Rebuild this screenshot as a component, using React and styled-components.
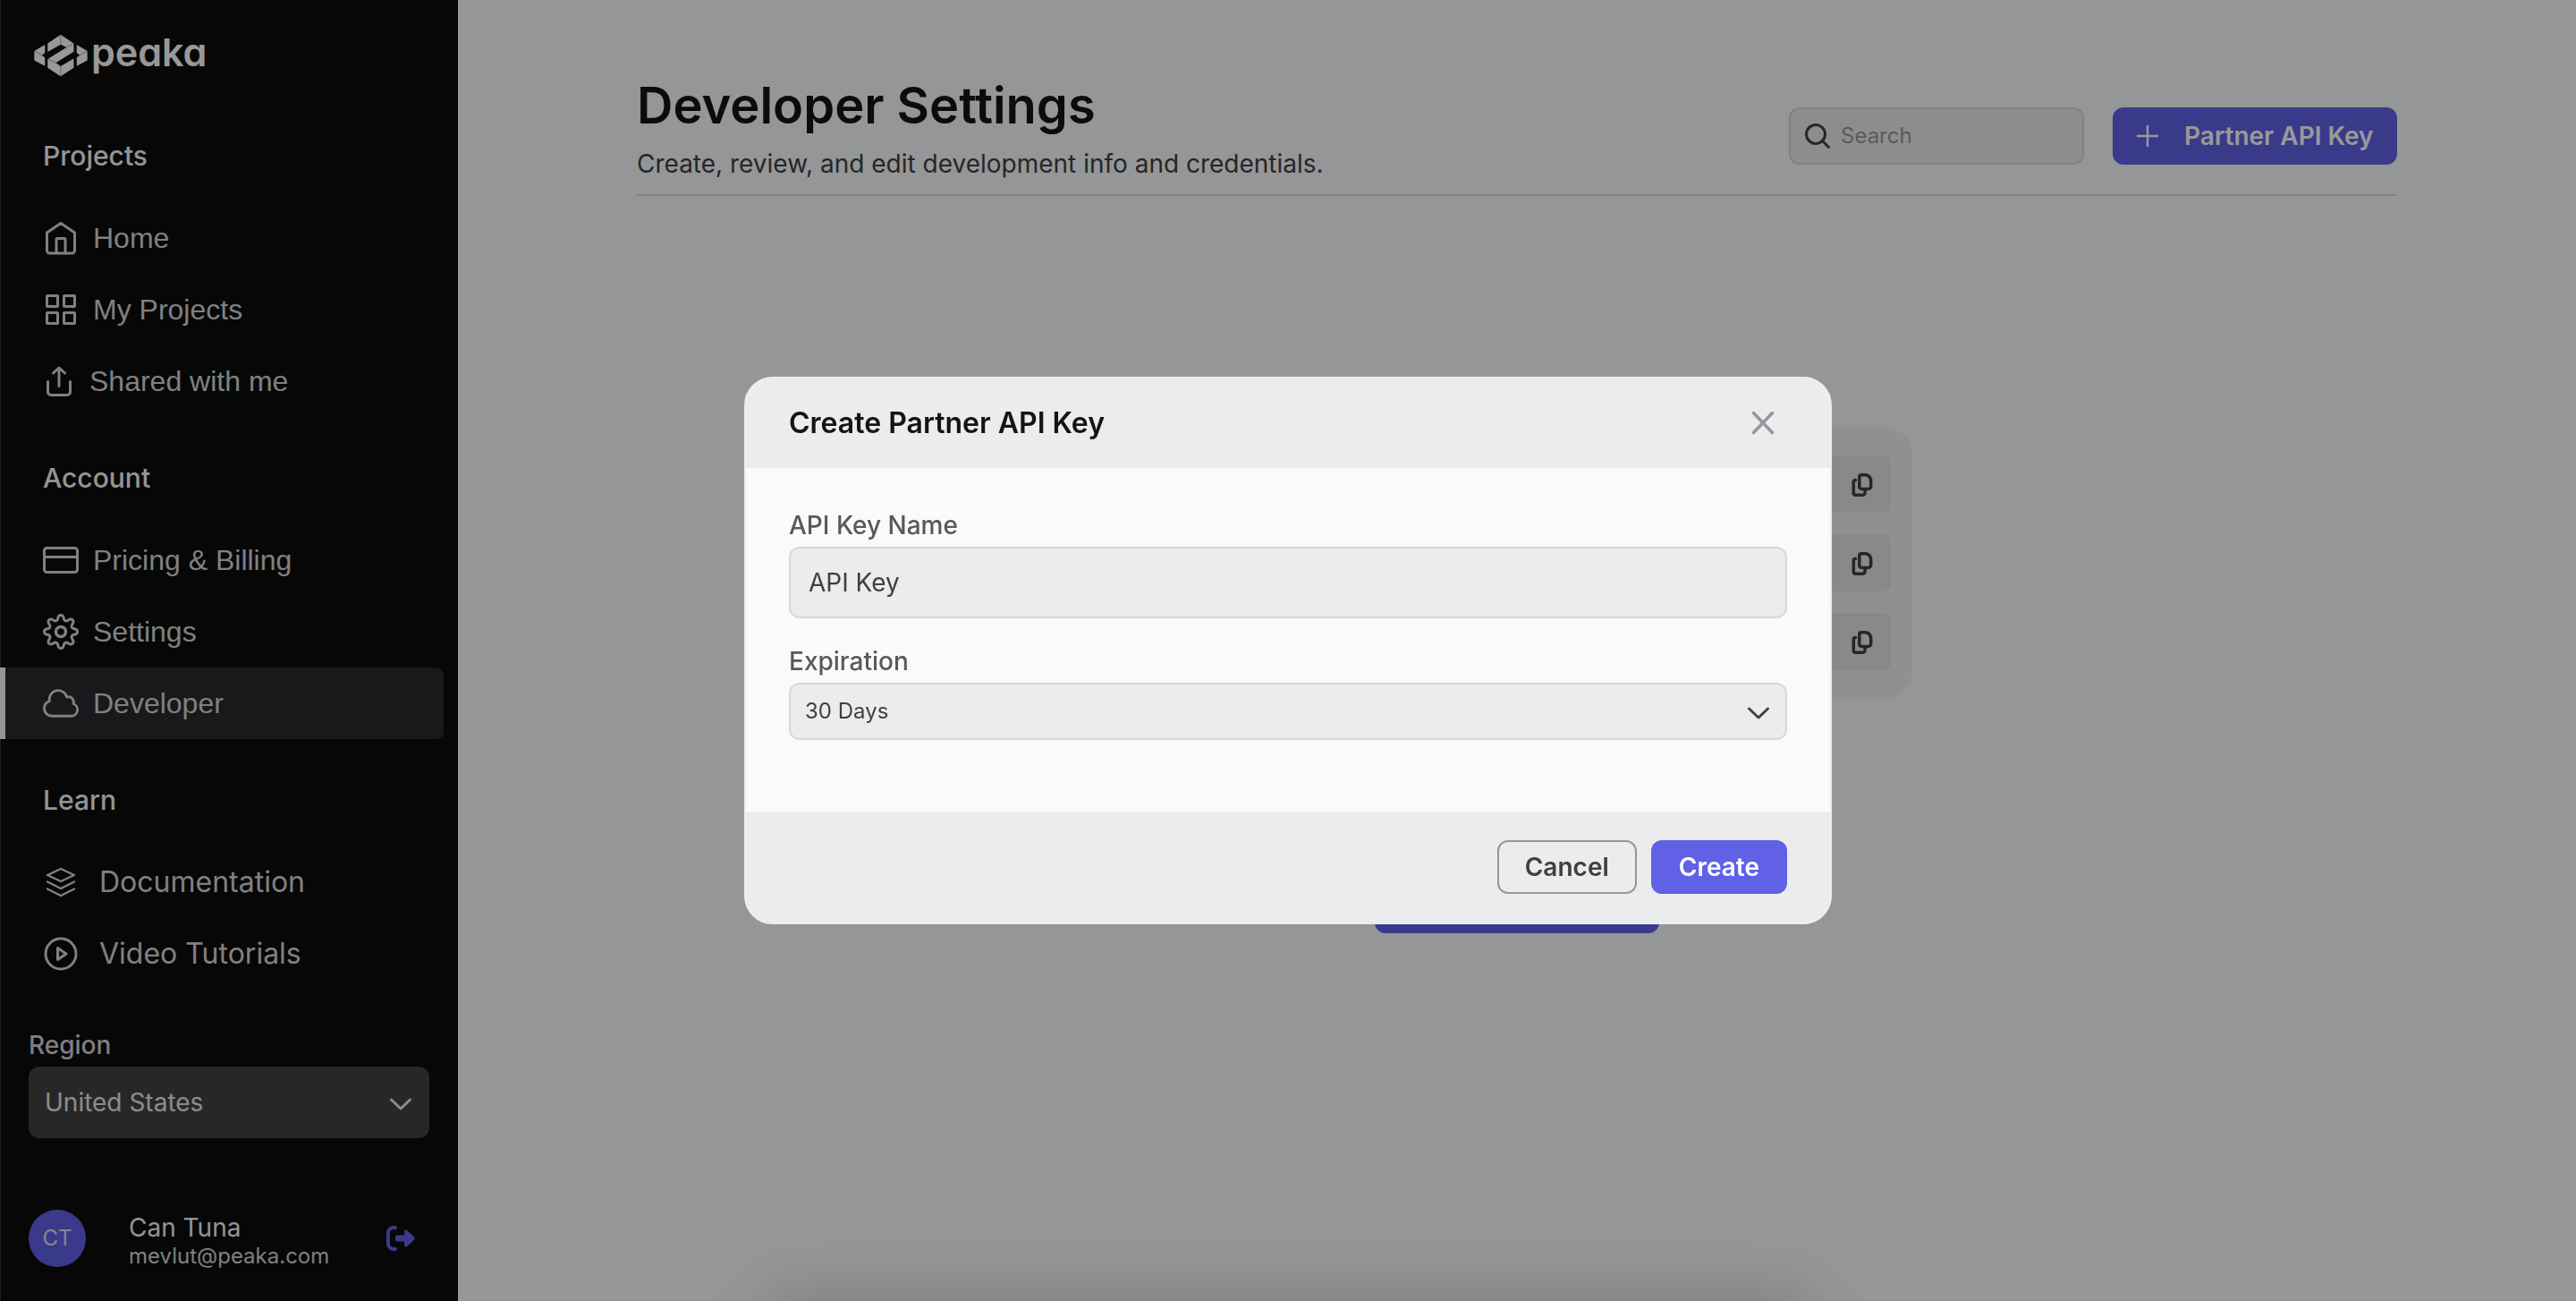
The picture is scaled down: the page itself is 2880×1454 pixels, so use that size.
import React from "react";
import styled, { createGlobalStyle } from "styled-components";

const GlobalStyle = createGlobalStyle`
  *, *::before, *::after { box-sizing: border-box; }
  body {
    margin: 0;
    background: #f9fafc;
    font-family: Inter, "Liberation Sans", sans-serif;
    font-size: 28px;
    line-height: 32px;
  }
  button, input, select { font: inherit; margin: 0; }
`;

const Page = styled.div`
  display: flex;
  min-height: 100vh;
`;

/* Sidebar */
const Sidebar = styled.aside`
  display: flex;
  flex-direction: column;
  flex: none;
  width: 512px;
  background: #0d0d0d;
  box-shadow: inset 1px 0 0 #363638;
`;

const Logo = styled.a`
  display: flex;
  align-items: center;
  gap: 4px;
  height: 106px;
  padding: 0 38px;
  padding-top: 18px;
  color: #fdfdfd;
  text-decoration: none;
  svg { width: 60px; height: 48px; }
`;

const Brand = styled.span`
  padding-bottom: 8px;
  font-size: 43px;
  font-weight: 600;
  line-height: 48px;
  font-feature-settings: "cv11" 1;
`;

const NavHeading = styled.h2`
  margin: 0;
  padding: 48px 48px 32px;
  font-size: 30px;
  line-height: 40px;
  font-weight: 500;
  color: #f7f7f7;
`;

const NavList = styled.ul`
  margin: 0;
  padding: 0 16px 0 0;
  list-style: none;
`;

const NavLink = styled.a`
  display: flex;
  align-items: center;
  gap: ${(p) => (p.$roomy ? 23 : 16)}px;
  height: 80px;
  padding-left: ${(p) => (p.$active ? 42 : 48)}px;
  border-left: ${(p) => (p.$active ? "6px solid #f9fafc" : "0")};
  border-radius: ${(p) => (p.$active ? "0 8px 8px 0" : "0")};
  background: ${(p) => (p.$active ? "#272a2c" : "transparent")};
  color: #d6d6d8;
  font-family: ${(p) => (p.$roomy ? 'Inter, "Liberation Sans", sans-serif' : '"Liberation Sans", Arial, sans-serif')};
  font-size: 32px;
  line-height: 40px;
  text-decoration: none;
`;

const Region = styled.div`
  display: flex;
  flex-direction: column;
  gap: 8px;
  margin: auto 32px 80px;
`;

const RegionLabel = styled.label`
  color: #d3d3da;
  font-weight: 500;
`;

const User = styled.div`
  display: flex;
  align-items: center;
  padding: 0 48px 38px 32px;
`;

const Avatar = styled.div`
  display: grid;
  place-items: center;
  width: 64px;
  height: 64px;
  margin-right: 48px;
  border-radius: 50%;
  background: #6161e8;
  color: #e0e0e6;
  font-size: 24px;
`;

const UserText = styled.div`
  flex: 1;
  padding-top: 4px;
  margin-bottom: -4px;
  color: #f7f7f7;
`;

const UserMail = styled.div`
  color: #d6d6d8;
  font-size: 24px;
`;

const IconButton = styled.button`
  display: grid;
  place-items: center;
  padding: 0;
  border: 0;
  background: transparent;
  color: ${(p) => p.$color};
  svg { display: block; }
`;

/* Shared controls */
const SelectBox = styled.div`
  display: grid;
  align-items: center;
  > * { grid-area: 1 / 1; }
  > svg { justify-self: end; margin-right: 18px; pointer-events: none; }
`;

const Select = styled.select`
  appearance: none;
  width: 100%;
  height: ${(p) => (p.$dark ? 80 : 64)}px;
  padding: 0 64px 0 ${(p) => (p.$dark ? 18 : 16)}px;
  border: ${(p) => (p.$dark ? "0" : "2px solid #d7d8da")};
  border-radius: 12px;
  background: ${(p) => (p.$dark ? "#414144" : "#ebecee")};
  color: ${(p) => (p.$dark ? "#eaeaec" : "#3f4042")};
  font-size: ${(p) => (p.$dark ? 28 : 24)}px;
`;

const PrimaryButton = styled.button`
  display: flex;
  align-items: center;
  gap: 28px;
  width: ${(p) => (p.$wide ? "318px" : "auto")};
  height: ${(p) => (p.$wide ? 64 : 60)}px;
  padding: 0 ${(p) => (p.$wide ? 26 : 31)}px;
  border: 0;
  border-radius: 12px;
  background: #6161e8;
  color: #fff;
  font-weight: 600;
`;

/* Main column */
const Main = styled.main`
  flex: 1;
  min-width: 0;
  padding: 84px 200px 0;
`;

const PageHeader = styled.header`
  display: flex;
  justify-content: space-between;
  padding-bottom: 19px;
  border-bottom: 2px solid #d7d8da;
`;

const Title = styled.h1`
  margin: 0 0 16px;
  color: #141414;
  font-size: 56px;
  line-height: 68px;
  font-weight: 600;
`;

const Subtitle = styled.p`
  margin: 0;
  color: #3f4042;
  line-height: 30px;
`;

const Actions = styled.div`
  display: flex;
  gap: 32px;
  padding-top: 36px;
`;

const SearchBox = styled.label`
  display: flex;
  align-items: center;
  gap: 12px;
  width: 330px;
  height: 64px;
  padding: 0 16px;
  border: 2px solid #d7d8da;
  border-radius: 12px;
  background: #ebecee;
  color: #3f4042;
  svg { flex: none; }
`;

const SearchInput = styled.input`
  flex: 1;
  min-width: 0;
  padding: 0;
  border: 0;
  outline: 0;
  background: transparent;
  color: inherit;
  font-size: 24px;
  &::placeholder { color: #96979a; opacity: 1; }
`;

const EmptyState = styled.section`
  display: flex;
  flex-direction: column;
  align-items: center;
  gap: 198px;
  padding-top: 258px;
`;

const KeyCard = styled.div`
  display: grid;
  gap: 24px;
  width: 884px;
  padding: 32px 24px;
  border-radius: 32px;
  background: #eff0f1;
`;

const KeyRow = styled.div`
  display: flex;
  justify-content: flex-end;
  height: 64px;
  padding-right: 20px;
  border-radius: 8px;
  background: #e4e5e6;
`;

/* Dialog */
const Scrim = styled.div`
  position: fixed;
  inset: 0;
  display: grid;
  place-items: center;
  background: rgba(0, 0, 0, 0.4);
`;

const Dialog = styled.form`
  width: 1216px;
  max-width: 90%;
  border: 2px solid #ebecee;
  border-radius: 32px;
  background: #f9fafc;
  overflow: hidden;
`;

const DialogHeader = styled.header`
  display: flex;
  align-items: center;
  justify-content: space-between;
  height: 100px;
  padding: 0 62px 0 48px;
  background: #ebecee;
`;

const DialogTitle = styled.h2`
  margin: 0;
  color: #141414;
  font-size: 32px;
  line-height: 40px;
  font-weight: 600;
`;

const DialogBody = styled.div`
  display: grid;
  gap: 32px;
  padding: 48px 48px 80px;
`;

const Field = styled.div`
  display: grid;
  gap: 8px;
`;

const FieldLabel = styled.label`
  color: #58595b;
  font-weight: 500;
`;

const TextInput = styled.input`
  width: 100%;
  height: 80px;
  padding: 0 20px;
  border: 2px solid #d7d8da;
  border-radius: 12px;
  background: #ebecee;
  color: #3f4042;
`;

const DialogFooter = styled.footer`
  display: flex;
  justify-content: flex-end;
  gap: 16px;
  padding: 32px 48px;
  background: #ebecee;
`;

const OutlineButton = styled.button`
  height: 60px;
  padding: 0 29px;
  border: 2px solid #96979a;
  border-radius: 12px;
  background: transparent;
  color: #3f4042;
  font-weight: 600;
`;

const BottomGlow = styled.div`
  position: fixed;
  top: 100%;
  left: 50%;
  width: 1170px;
  height: 120px;
  margin-left: -585px;
  box-shadow: 0 0 80px rgba(0, 0, 0, 0.2);
`;

/* Icons */
const stroke = { fill: "none", stroke: "currentColor", strokeWidth: 3, strokeLinecap: "round", strokeLinejoin: "round" };
const Icon40 = ({ children, width = 3, box = "0 0 40 40", size = 40 }) => (
  <svg width={size} height={size} viewBox={box} {...stroke} strokeWidth={width} aria-hidden="true">{children}</svg>
);

const HomeIcon = () => (
  <Icon40>
    <path d="M4.5 14 20 3.5 35.5 14V34a3 3 0 0 1-3 3h-25a3 3 0 0 1-3-3z" />
    <path d="M15 37V21.5a1 1 0 0 1 1-1h8a1 1 0 0 1 1 1V37" />
  </Icon40>
);
const GridIcon = () => (
  <Icon40>
    {[4.5, 23.5].map((x) => [4.5, 23.5].map((y) => <rect key={`${x}-${y}`} x={x} y={y} width="12" height="12" rx="0.5" />))}
  </Icon40>
);
const ShareIcon = () => (
  <Icon40 box="0 0 36 36" size={36}>
    <path d="M18 23.5V3.5M11.5 9 18 3l6.5 6" />
    <path d="M5.500 18.5V30a3.5 3.5 0 0 0 3.5 3.5h18a3.5 3.5 0 0 0 3.5-3.5V18.5" />
  </Icon40>
);
const CardIcon = () => (
  <Icon40>
    <rect x="1.5" y="6.5" width="37" height="27" rx="3" />
    <path d="M1.5 16.5h37" />
  </Icon40>
);
const gearPath = () => {
  const points = [];
  for (let i = 0; i < 240; i += 1) {
    const t = (i / 240) * Math.PI * 2;
    const r = 15.9 + (2.6 * Math.tanh(1.3 * Math.cos(8 * t))) / Math.tanh(1.3);
    points.push(`${(20 + r * Math.cos(t)).toFixed(2)} ${(20 + r * Math.sin(t)).toFixed(2)}`);
  }
  return `M${points.join("L")}Z`;
};
const GearIcon = () => (
  <Icon40>
    <path d={gearPath()} />
    <circle cx="20" cy="20" r="5.5" strokeWidth="3.5" />
  </Icon40>
);
const CloudIcon = () => (
  <Icon40 box="1.5 1.5 21 21" width={1.5}>
    <path d="M2.25 15a4.5 4.5 0 0 0 4.5 4.5H18a3.75 3.75 0 0 0 1.332-7.257 3 3 0 0 0-3.758-3.848 5.25 5.25 0 0 0-10.233 2.33A4.502 4.502 0 0 0 2.25 15z" />
  </Icon40>
);
const LayersIcon = () => (
  <Icon40 width={2.4}>
    <path d="M20 5 35 12 20 19 5 12zM5 19.5 20 27l15-7.5M5 27.5 20 35l15-7.5" />
  </Icon40>
);
const PlayIcon = () => (
  <Icon40>
    <circle cx="20" cy="20" r="17" />
    <path d="M16.5 13.5 26 20l-9.500 6.5z" />
  </Icon40>
);
const Chevron = ({ color }) => (
  <svg width="28" height="20" viewBox="0 0 28 20" {...stroke} stroke={color} aria-hidden="true">
    <path d="M3.5 7 14 17 24.5 7" />
  </svg>
);
const LogoutIcon = () => (
  <svg width="32" height="28" viewBox="0 0 32 28" aria-hidden="true">
    <path d="M10 2H8a6 6 0 0 0-6 6v12a6 6 0 0 0 6 6h2" fill="none" stroke="currentColor" strokeWidth="4" strokeLinecap="round" />
    <path d="M12 10.5h8V6q0-2 2-1.5 1 .3 9.4 8.3.8 1.2 0 2.4Q23 23.2 22 23.5q-2 .5-2-1.5v-4.5h-8q-2 0-2-2v-3q0-2 2-2z" fill="currentColor" />
  </svg>
);
const CopyIcon = () => (
  <svg width="24" height="28" viewBox="0 0 24 28" {...stroke} strokeWidth="3.500" aria-hidden="true">
    <path d="M11 3.700h5q5.700 1 5.700 7.300v5.500a3 3 0 0 1-3 3h-7.700a2.200 2.200 0 0 1-2.200-2.200V5.900a2.200 2.200 0 0 1 2.200-2.200z" />
    <path d="M4.500 9.500a2.200 2.200 0 0 0-2.200 2.200v12.300a2.200 2.200 0 0 0 2.200 2.200h8a2.600 2.600 0 0 0 2.600-2.600v-2" />
  </svg>
);
const SearchIcon = () => (
  <svg width="28" height="28" viewBox="0 0 28 28" {...stroke} aria-hidden="true">
    <circle cx="12" cy="12" r="10.5" />
    <path d="m19.5 19.5 7 7" />
  </svg>
);
const PlusIcon = () => (
  <svg width="26" height="26" viewBox="0 0 26 26" {...stroke} strokeWidth="2.4" aria-hidden="true">
    <path d="M13 2v22M2 13h22" />
  </svg>
);
const CloseIcon = () => (
  <svg width="26" height="26" viewBox="0 0 26 26" {...stroke} strokeWidth="3.6" aria-hidden="true">
    <path d="m2.5 1.500 21 22M23.5 1.500l-21 22" />
  </svg>
);
const LogoMark = () => (
  <svg viewBox="114 116 177 141" aria-hidden="true">
    <g fill="currentColor">
      <path d="M159 147 202 118 245 147V174L186 211 202 222 245 197V227L202 255 159 227V198L221 160 202 150 159 175z" />
      <path d="M115 172 150 151V178L140 186 150 193V221L115 203z" />
      <path d="M290 172 255 151V178L265 186 255 193V221L290 203z" />
    </g>
    <path d="M202 118V150M202 222V255M221 160 245 147M159 198 186 211M115 172 140 186M290 172 265 186" stroke="#0d0d0d" strokeWidth="1.5" fill="none" opacity="0.7" />
  </svg>
);

const sections = [
  {
    title: "Projects",
    items: [
      { label: "Home", icon: HomeIcon },
      { label: "My Projects", icon: GridIcon },
      { label: "Shared with me", icon: ShareIcon },
    ],
  },
  {
    title: "Account",
    items: [
      { label: "Pricing & Billing", icon: CardIcon },
      { label: "Settings", icon: GearIcon },
      { label: "Developer", icon: CloudIcon, active: true },
    ],
  },
  {
    title: "Learn",
    roomy: true,
    items: [
      { label: "Documentation", icon: LayersIcon },
      { label: "Video Tutorials", icon: PlayIcon },
    ],
  },
];

export default function App() {
  return (
    <>
      <GlobalStyle />
      <Page>
        <Sidebar>
          <Logo href="#">
            <LogoMark />
            <Brand>peaka</Brand>
          </Logo>
          <nav>
            {sections.map((section) => (
              <section key={section.title}>
                <NavHeading>{section.title}</NavHeading>
                <NavList>
                  {section.items.map(({ label, icon: ItemIcon, active }) => (
                    <li key={label}>
                      <NavLink href="#" $active={active} $roomy={section.roomy}>
                        <ItemIcon />
                        {label}
                      </NavLink>
                    </li>
                  ))}
                </NavList>
              </section>
            ))}
          </nav>
          <Region>
            <RegionLabel htmlFor="region">Region</RegionLabel>
            <SelectBox>
              <Select id="region" $dark defaultValue="us">
                <option value="us">United States</option>
              </Select>
              <Chevron color="#eaeaec" />
            </SelectBox>
          </Region>
          <User>
            <Avatar>CT</Avatar>
            <UserText>
              Can Tuna
              <UserMail>mevlut@peaka.com</UserMail>
            </UserText>
            <IconButton type="button" aria-label="Log out" $color="#6161e8">
              <LogoutIcon />
            </IconButton>
          </User>
        </Sidebar>

        <Main>
          <PageHeader>
            <div>
              <Title>Developer Settings</Title>
              <Subtitle>Create, review, and edit development info and credentials.</Subtitle>
            </div>
            <Actions>
              <SearchBox>
                <SearchIcon />
                <SearchInput type="search" placeholder="Search" aria-label="Search" />
              </SearchBox>
              <PrimaryButton type="button" $wide>
                <PlusIcon />
                Partner API Key
              </PrimaryButton>
            </Actions>
          </PageHeader>
          <EmptyState>
            <KeyCard>
              {["first", "second", "third"].map((name) => (
                <KeyRow key={name}>
                  <IconButton type="button" aria-label={`Copy ${name} value`} $color="#3f4042">
                    <CopyIcon />
                  </IconButton>
                </KeyRow>
              ))}
            </KeyCard>
            <PrimaryButton type="button" $wide aria-label="Add key">
              <PlusIcon />
            </PrimaryButton>
          </EmptyState>
        </Main>
      </Page>

      <Scrim>
        <Dialog role="dialog" aria-modal="true" aria-labelledby="dialog-title">
          <DialogHeader>
            <DialogTitle id="dialog-title">Create Partner API Key</DialogTitle>
            <IconButton type="button" aria-label="Close" $color="#96979a">
              <CloseIcon />
            </IconButton>
          </DialogHeader>
          <DialogBody>
            <Field>
              <FieldLabel htmlFor="key-name">API Key Name</FieldLabel>
              <TextInput id="key-name" type="text" defaultValue="API Key" />
            </Field>
            <Field>
              <FieldLabel htmlFor="expiration">Expiration</FieldLabel>
              <SelectBox>
                <Select id="expiration" defaultValue="30">
                  <option value="30">30 Days</option>
                </Select>
                <Chevron color="#3f4042" />
              </SelectBox>
            </Field>
          </DialogBody>
          <DialogFooter>
            <OutlineButton type="button">Cancel</OutlineButton>
            <PrimaryButton type="button">Create</PrimaryButton>
          </DialogFooter>
        </Dialog>
      </Scrim>
      <BottomGlow />
    </>
  );
}
